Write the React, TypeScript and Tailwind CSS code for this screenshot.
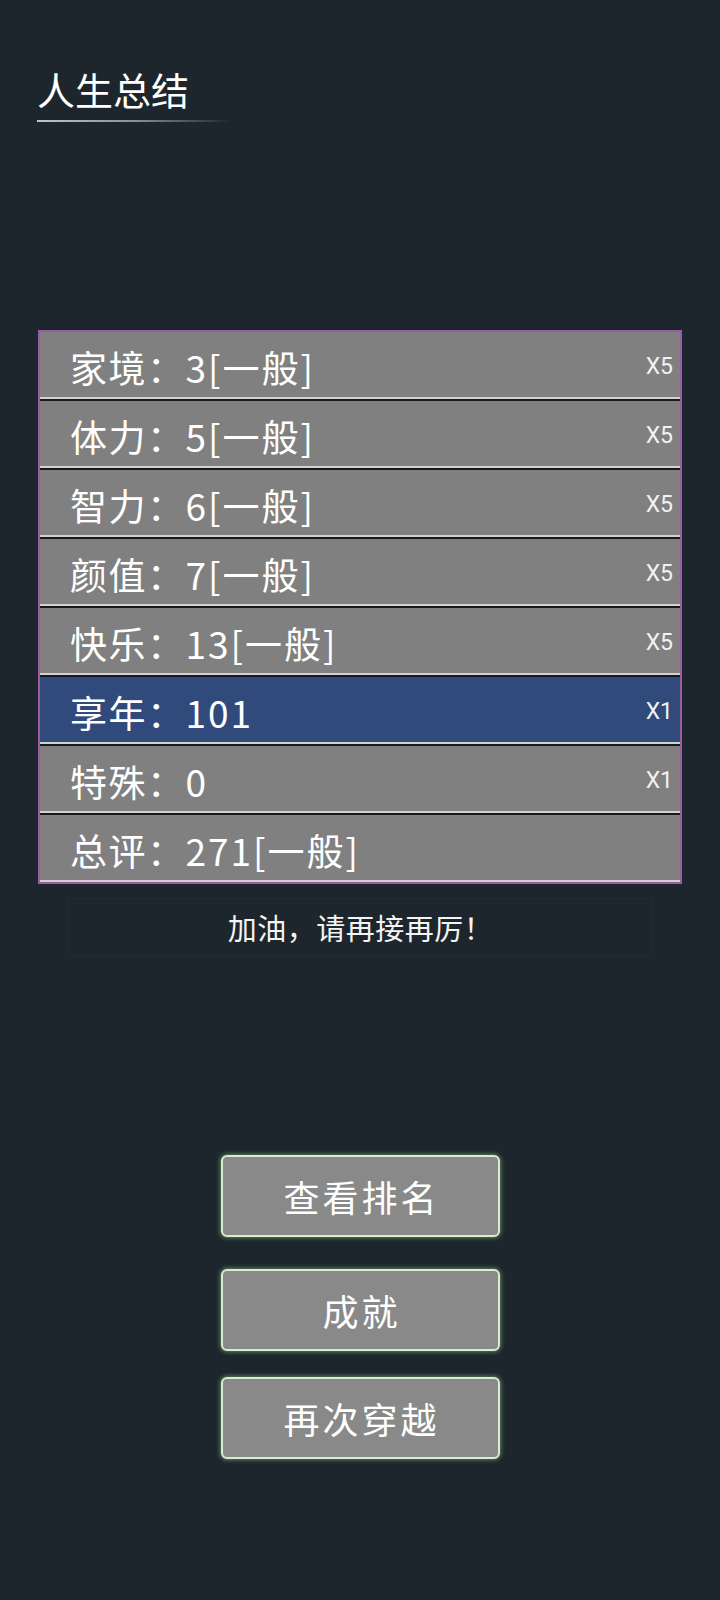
import React from "react";

const cjk = { fontFamily: '"Noto Sans CJK SC", "Noto Sans", sans-serif' };
const latin = { fontFamily: 'Roboto, "Liberation Sans", sans-serif' };

const rows = [
  { name: "家境", value: "3[一般]", mult: "X5", hi: false },
  { name: "体力", value: "5[一般]", mult: "X5", hi: false },
  { name: "智力", value: "6[一般]", mult: "X5", hi: false },
  { name: "颜值", value: "7[一般]", mult: "X5", hi: false },
  { name: "快乐", value: "13[一般]", mult: "X5", hi: false },
  { name: "享年", value: "101", mult: "X1", hi: true },
  { name: "特殊", value: "0", mult: "X1", hi: false },
  { name: "总评", value: "271[一般]", mult: "", hi: false },
];

function Btn({ text, className }: { text: string; className: string }) {
  return (
    <button
      className={
        "flex h-[82px] w-[279px] items-center justify-center rounded-[6px] border-2 border-[#d6eecf] bg-[#898989] pl-[3px] text-[36px] leading-[36px] tracking-[3px] text-white shadow-[0_0_4px_1px_rgba(150,210,140,0.55)] " +
        className
      }
      style={cjk}
    >
      {text}
    </button>
  );
}

export default function App() {
  return (
    <div className="min-h-[1600px] w-full bg-[#1d262d] pt-[70px]" style={cjk}>
      <div className="pl-[37px]">
        <div className="text-[38px] leading-[38px] text-white">人生总结</div>
        <div className="mt-[12px] h-[2px] w-[195px] bg-gradient-to-r from-[#c4c4c8] via-[#8c8f94] to-transparent" />
      </div>

      <div className="mx-[38px] mt-[208px] flex flex-col gap-[2px] border-2 border-[#9a5ca6] bg-[#161a1d]">
        {rows.map((r) => (
          <div
            key={r.name}
            className={
              "flex h-[67px] items-center justify-between border-b-2 border-[#d2d2d2] pl-[30px] pr-[7px] pt-[6px] " +
              (r.hi ? "bg-[#304a7b]" : "bg-[#808080]")
            }
          >
            <span className="text-[37px] leading-[37px] text-white">
              <span className="tracking-[1.5px]">{r.name}：</span>
              <span className="tracking-[2px]">{r.value}</span>
            </span>
            {r.mult && (
              <span className="-mt-[3px] text-[23px] leading-[23px] text-[#f2f2f2]" style={latin}>
                {r.mult}
              </span>
            )}
          </div>
        ))}
      </div>

      <div className="mx-[68px] mt-[14px] flex h-[58px] items-center justify-center border border-[#212b32]">
        <span className="pl-[1px] text-[29px] leading-[29px] tracking-[0.5px] text-[#f4f4f4]">加油，请再接再厉！</span>
      </div>

      <div className="flex flex-col items-center">
        <Btn text="查看排名" className="mt-[199px]" />
        <Btn text="成就" className="mt-[32px]" />
        <Btn text="再次穿越" className="mt-[26px]" />
      </div>
    </div>
  );
}
